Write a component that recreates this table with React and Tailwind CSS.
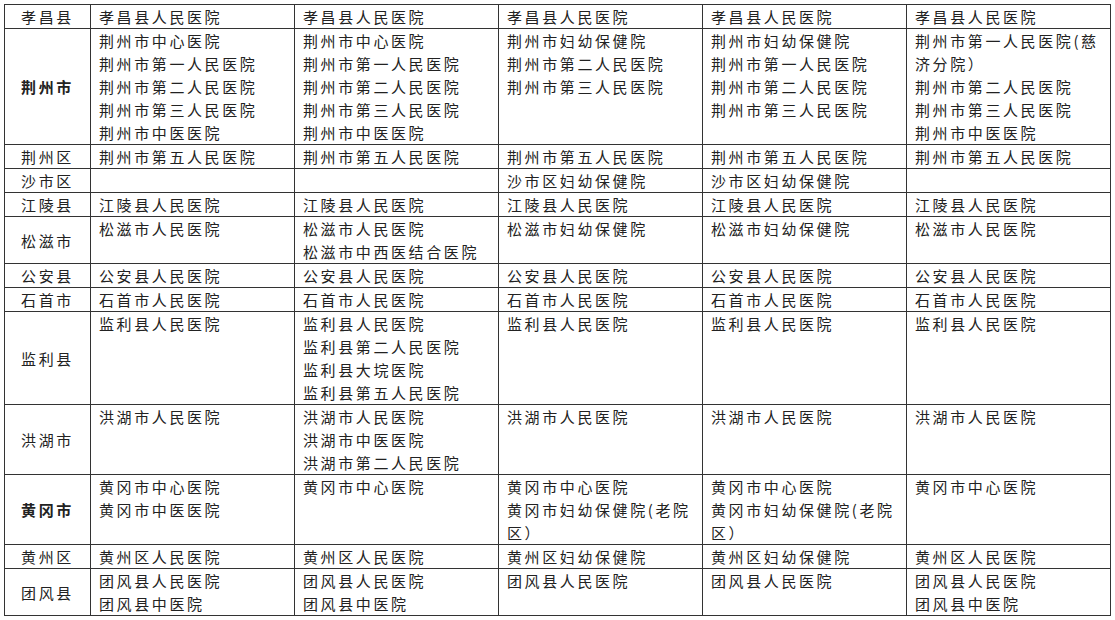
const rows = [
  {
    name: "孝昌县",
    cells: [["孝昌县人民医院"], ["孝昌县人民医院"], ["孝昌县人民医院"], ["孝昌县人民医院"], ["孝昌县人民医院"]],
  },
  {
    name: "荆州市",
    bold: true,
    cells: [
      ["荆州市中心医院", "荆州市第一人民医院", "荆州市第二人民医院", "荆州市第三人民医院", "荆州市中医医院"],
      ["荆州市中心医院", "荆州市第一人民医院", "荆州市第二人民医院", "荆州市第三人民医院", "荆州市中医医院"],
      ["荆州市妇幼保健院", "荆州市第二人民医院", "荆州市第三人民医院"],
      ["荆州市妇幼保健院", "荆州市第一人民医院", "荆州市第二人民医院", "荆州市第三人民医院"],
      ["荆州市第一人民医院(慈", "济分院）", "荆州市第二人民医院", "荆州市第三人民医院", "荆州市中医医院"],
    ],
  },
  {
    name: "荆州区",
    cells: [["荆州市第五人民医院"], ["荆州市第五人民医院"], ["荆州市第五人民医院"], ["荆州市第五人民医院"], ["荆州市第五人民医院"]],
  },
  {
    name: "沙市区",
    cells: [[], [], ["沙市区妇幼保健院"], ["沙市区妇幼保健院"], []],
  },
  {
    name: "江陵县",
    cells: [["江陵县人民医院"], ["江陵县人民医院"], ["江陵县人民医院"], ["江陵县人民医院"], ["江陵县人民医院"]],
  },
  {
    name: "松滋市",
    cells: [
      ["松滋市人民医院"],
      ["松滋市人民医院", "松滋市中西医结合医院"],
      ["松滋市妇幼保健院"],
      ["松滋市妇幼保健院"],
      ["松滋市人民医院"],
    ],
  },
  {
    name: "公安县",
    cells: [["公安县人民医院"], ["公安县人民医院"], ["公安县人民医院"], ["公安县人民医院"], ["公安县人民医院"]],
  },
  {
    name: "石首市",
    cells: [["石首市人民医院"], ["石首市人民医院"], ["石首市人民医院"], ["石首市人民医院"], ["石首市人民医院"]],
  },
  {
    name: "监利县",
    cells: [
      ["监利县人民医院"],
      ["监利县人民医院", "监利县第二人民医院", "监利县大垸医院", "监利县第五人民医院"],
      ["监利县人民医院"],
      ["监利县人民医院"],
      ["监利县人民医院"],
    ],
  },
  {
    name: "洪湖市",
    cells: [
      ["洪湖市人民医院"],
      ["洪湖市人民医院", "洪湖市中医医院", "洪湖市第二人民医院"],
      ["洪湖市人民医院"],
      ["洪湖市人民医院"],
      ["洪湖市人民医院"],
    ],
  },
  {
    name: "黄冈市",
    bold: true,
    cells: [
      ["黄冈市中心医院", "黄冈市中医医院"],
      ["黄冈市中心医院"],
      ["黄冈市中心医院", "黄冈市妇幼保健院(老院", "区）"],
      ["黄冈市中心医院", "黄冈市妇幼保健院(老院", "区）"],
      ["黄冈市中心医院"],
    ],
  },
  {
    name: "黄州区",
    cells: [["黄州区人民医院"], ["黄州区人民医院"], ["黄州区妇幼保健院"], ["黄州区妇幼保健院"], ["黄州区人民医院"]],
  },
  {
    name: "团风县",
    cells: [
      ["团风县人民医院", "团风县中医院"],
      ["团风县人民医院", "团风县中医院"],
      ["团风县人民医院"],
      ["团风县人民医院"],
      ["团风县人民医院", "团风县中医院"],
    ],
  },
];

function App() {
  return (
    <div className="bg-white min-h-screen pt-[4px] pl-[4px] font-['Noto_Sans_CJK_SC',sans-serif] text-[#222]">
      <table className="table-fixed border-collapse w-[1106px] text-[15px] leading-[23px] tracking-[2.6px]">
        <colgroup>
          <col className="w-[86px]" />
          <col className="w-[204px]" />
          <col className="w-[204px]" />
          <col className="w-[204px]" />
          <col className="w-[204px]" />
          <col className="w-[204px]" />
        </colgroup>
        <tbody>
          {rows.map((r, idx) => (
            <tr key={idx}>
              <td
                className={
                  "border border-[#333] text-center align-middle p-0 whitespace-nowrap " +
                  (r.bold ? "font-bold" : "font-normal")
                }
              >
                {r.name}
              </td>
              {r.cells.map((lines, i) => (
                <td key={i} className="border border-[#333] align-top py-0 pl-[8px] pr-0 whitespace-nowrap">
                  {lines.map((l, j) => (
                    <div key={j}>{l}</div>
                  ))}
                </td>
              ))}
            </tr>
          ))}
        </tbody>
      </table>
    </div>
  );
}

export default App;
